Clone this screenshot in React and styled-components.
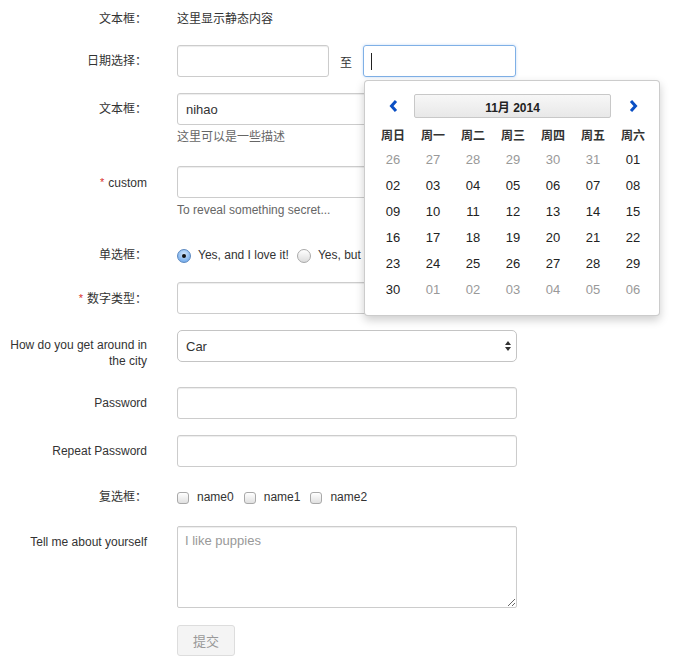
import styled, { createGlobalStyle } from 'styled-components';

const GlobalStyle = createGlobalStyle`
  body {
    margin: 0;
    background: #fff;
    font-family: "Liberation Sans", "Noto Sans CJK SC", sans-serif;
    font-size: 12px;
    color: #333;
  }
`;

const Form = styled.form`
  padding-top: 3px;
  width: 692px;
`;

const Row = styled.div`
  display: grid;
  grid-template-columns: 147px 340px;
  column-gap: 30px;
  margin-bottom: ${(p) => p.$mb}px;
`;

const Label = styled.label`
  text-align: right;
  padding-top: 7px;
  line-height: ${(p) => (p.$tight ? 16 : 18)}px;
  color: #333;
`;

const Star = styled.span`
  color: #d9302c;
  font-size: 11px;
  margin-right: 4px;
  vertical-align: 1px;
`;

const Control = styled.div`
  min-width: 0;
`;

const Static = styled.div`
  height: 32px;
  line-height: 32px;
`;

const Input = styled.input`
  box-sizing: border-box;
  display: block;
  width: ${(p) => p.$w || 340}px;
  height: 32px;
  padding: 0 8px;
  border: 1px solid #ccc;
  border-radius: 3px;
  background: #fff;
  box-shadow: inset 0 1px 1px rgba(0, 0, 0, 0.075);
  font: inherit;
  font-size: 13px;
  color: #333;
  outline: none;
`;

const DateLine = styled.div`
  display: flex;
  align-items: center;
  height: 32px;
`;

const To = styled.span`
  padding: 0 11px;
`;

const PickerAnchor = styled.div`
  position: relative;
`;

const FocusBox = styled.div`
  box-sizing: border-box;
  width: 153px;
  height: 32px;
  border: 1px solid #7fb0e6;
  border-radius: 3px;
  box-shadow: 0 0 3px rgba(82, 150, 230, 0.35);
  padding: 7px 7px;
`;

const Caret = styled.span`
  display: block;
  width: 1px;
  height: 17px;
  background: #222;
`;

const Popup = styled.div`
  position: absolute;
  top: 35px;
  left: 1px;
  z-index: 10;
  box-sizing: border-box;
  width: 296px;
  padding: 13px 8px;
  background: #fff;
  border: 1px solid rgba(0, 0, 0, 0.2);
  border-radius: 4px;
  box-shadow: 0 4px 10px rgba(0, 0, 0, 0.2);
`;

const CalHead = styled.div`
  display: grid;
  grid-template-columns: repeat(7, 40px);
  height: 24px;
  margin-bottom: 2px;
`;

const Arrow = styled.span`
  display: flex;
  align-items: center;
  justify-content: center;
`;

const MonthBtn = styled.div`
  grid-column: 2 / span 5;
  margin: 0 2px 0 1px;
  border: 1px solid #c8c8c8;
  border-radius: 2px;
  background: linear-gradient(#f7f7f7, #e8e8e8);
  display: flex;
  align-items: center;
  justify-content: center;
  font-weight: bold;
  color: #222;
`;

const CalGrid = styled.div`
  display: grid;
  grid-template-columns: repeat(7, 40px);
  grid-auto-rows: 26px;
`;

const WeekDay = styled.div`
  height: 28px;
  display: flex;
  align-items: center;
  justify-content: center;
  font-weight: bold;
  color: #333;
`;

const Day = styled.div`
  display: flex;
  align-items: center;
  justify-content: center;
  font-size: 13px;
  color: ${(p) => (p.$muted ? '#999' : '#222')};
`;

const Help = styled.div`
  margin-top: 3px;
  line-height: 18px;
  color: #666;
`;

const Options = styled.div`
  display: flex;
  align-items: center;
  height: 32px;
  white-space: nowrap;
`;

const Option = styled.label`
  display: flex;
  align-items: center;
  margin-right: ${(p) => p.$gap}px;
`;

const Radio = styled.span`
  box-sizing: border-box;
  width: 14px;
  height: 14px;
  border-radius: 50%;
  margin: 2px 7px 0 0;
  display: flex;
  align-items: center;
  justify-content: center;
  border: 1px solid ${(p) => (p.$on ? '#5b88c0' : '#a9a9a9')};
  background: ${(p) =>
    p.$on
      ? 'radial-gradient(circle at 50% 35%, #d3e6fb, #7fb3ee 70%, #5d9be3)'
      : 'linear-gradient(#ffffff, #dcdcdc)'};
  &::after {
    content: '';
    display: ${(p) => (p.$on ? 'block' : 'none')};
    width: 4px;
    height: 4px;
    border-radius: 50%;
    background: #111;
  }
`;

const Check = styled.span`
  box-sizing: border-box;
  width: 12px;
  height: 12px;
  border-radius: 3px;
  margin: 2px 8px 0 0;
  border: 1px solid #a9a9a9;
  background: linear-gradient(#ffffff, #e0e0e0);
`;

const SelectWrap = styled.div`
  position: relative;
  width: 340px;
`;

const Select = styled.select`
  box-sizing: border-box;
  appearance: none;
  width: 100%;
  height: 32px;
  padding: 0 8px;
  border: 1px solid #c4c4c4;
  border-radius: 5px;
  background: #fff;
  font: inherit;
  font-size: 13px;
  color: #333;
  outline: none;
`;

const SelectArrows = styled.svg`
  position: absolute;
  right: 6px;
  top: 11px;
  pointer-events: none;
`;

const TextArea = styled.textarea`
  box-sizing: border-box;
  display: block;
  width: 340px;
  height: 82px;
  padding: 6px 7px;
  border: 1px solid #ccc;
  border-radius: 2px;
  box-shadow: inset 0 1px 1px rgba(0, 0, 0, 0.075);
  font: inherit;
  font-size: 13px;
  color: #333;
  outline: none;
  &::placeholder {
    color: #999;
  }
`;

const Submit = styled.button`
  width: 58px;
  height: 31px;
  border: 1px solid #ddd;
  border-radius: 3px;
  background: #f4f4f4;
  color: #999;
  font: inherit;
  font-size: 13px;
`;

const weekDays = ['周日', '周一', '周二', '周三', '周四', '周五', '周六'];

function buildDays() {
  const days = [];
  for (let d = 26; d <= 31; d++) days.push({ n: d, muted: true });
  for (let d = 1; d <= 30; d++) days.push({ n: d, muted: false });
  for (let d = 1; d <= 6; d++) days.push({ n: d, muted: true });
  return days;
}

function Chevron({ dir }) {
  const d = dir === 'left' ? 'M7 1 L2.5 6 L7 11' : 'M2 1 L6.5 6 L2 11';
  return (
    <svg width="9" height="12" viewBox="0 0 9 12">
      <path d={d} fill="none" stroke="#0a4fc4" strokeWidth="3" strokeLinejoin="miter" />
    </svg>
  );
}

function Calendar() {
  return (
    <Popup>
      <CalHead>
        <Arrow>
          <Chevron dir="left" />
        </Arrow>
        <MonthBtn>11月 2014</MonthBtn>
        <Arrow>
          <Chevron dir="right" />
        </Arrow>
      </CalHead>
      <CalGrid>
        {weekDays.map((w) => (
          <WeekDay key={w}>{w}</WeekDay>
        ))}
        {buildDays().map((d, i) => (
          <Day key={i} $muted={d.muted}>
            {String(d.n).padStart(2, '0')}
          </Day>
        ))}
      </CalGrid>
    </Popup>
  );
}

export default function App() {
  return (
    <>
      <GlobalStyle />
      <Form onSubmit={(e) => e.preventDefault()}>
        <Row $mb={10}>
          <Label>文本框：</Label>
          <Control>
            <Static>这里显示静态内容</Static>
          </Control>
        </Row>

        <Row $mb={16}>
          <Label>日期选择：</Label>
          <Control>
            <DateLine>
              <Input $w={152} />
              <To>至</To>
              <PickerAnchor>
                <FocusBox>
                  <Caret />
                </FocusBox>
                <Calendar />
              </PickerAnchor>
            </DateLine>
          </Control>
        </Row>

        <Row $mb={20}>
          <Label>文本框：</Label>
          <Control>
            <Input defaultValue="nihao" />
            <Help>这里可以是一些描述</Help>
          </Control>
        </Row>

        <Row $mb={20}>
          <Label>
            <Star>*</Star>custom
          </Label>
          <Control>
            <Input />
            <Help>To reveal something secret...</Help>
          </Control>
        </Row>

        <Row $mb={11}>
          <Label>单选框：</Label>
          <Control>
            <Options>
              <Option $gap={8}>
                <Radio $on />
                Yes, and I love it!
              </Option>
              <Option $gap={8}>
                <Radio />
                Yes, but
              </Option>
            </Options>
          </Control>
        </Row>

        <Row $mb={16}>
          <Label>
            <Star>*</Star>数字类型：
          </Label>
          <Control>
            <Input />
          </Control>
        </Row>

        <Row $mb={18}>
          <Label $tight>
            How do you get around in
            <br />
            the city
          </Label>
          <Control>
            <SelectWrap>
              <Select defaultValue="Car">
                <option>Car</option>
                <option>Bus</option>
                <option>Bike</option>
              </Select>
              <SelectArrows width="6" height="10" viewBox="0 0 6 10">
                <path d="M3 0 L6 4 L0 4 Z M3 10 L6 6 L0 6 Z" fill="#333" />
              </SelectArrows>
            </SelectWrap>
          </Control>
        </Row>

        <Row $mb={16}>
          <Label>Password</Label>
          <Control>
            <Input type="password" />
          </Control>
        </Row>

        <Row $mb={14}>
          <Label>Repeat Password</Label>
          <Control>
            <Input type="password" />
          </Control>
        </Row>

        <Row $mb={13}>
          <Label>复选框：</Label>
          <Control>
            <Options>
              <Option $gap={10}>
                <Check />
                name0
              </Option>
              <Option $gap={10}>
                <Check />
                name1
              </Option>
              <Option $gap={10}>
                <Check />
                name2
              </Option>
            </Options>
          </Control>
        </Row>

        <Row $mb={17}>
          <Label>Tell me about yourself</Label>
          <Control>
            <TextArea placeholder="I like puppies" />
          </Control>
        </Row>

        <Row $mb={8}>
          <span />
          <Control>
            <Submit type="submit">提交</Submit>
          </Control>
        </Row>
      </Form>
    </>
  );
}
